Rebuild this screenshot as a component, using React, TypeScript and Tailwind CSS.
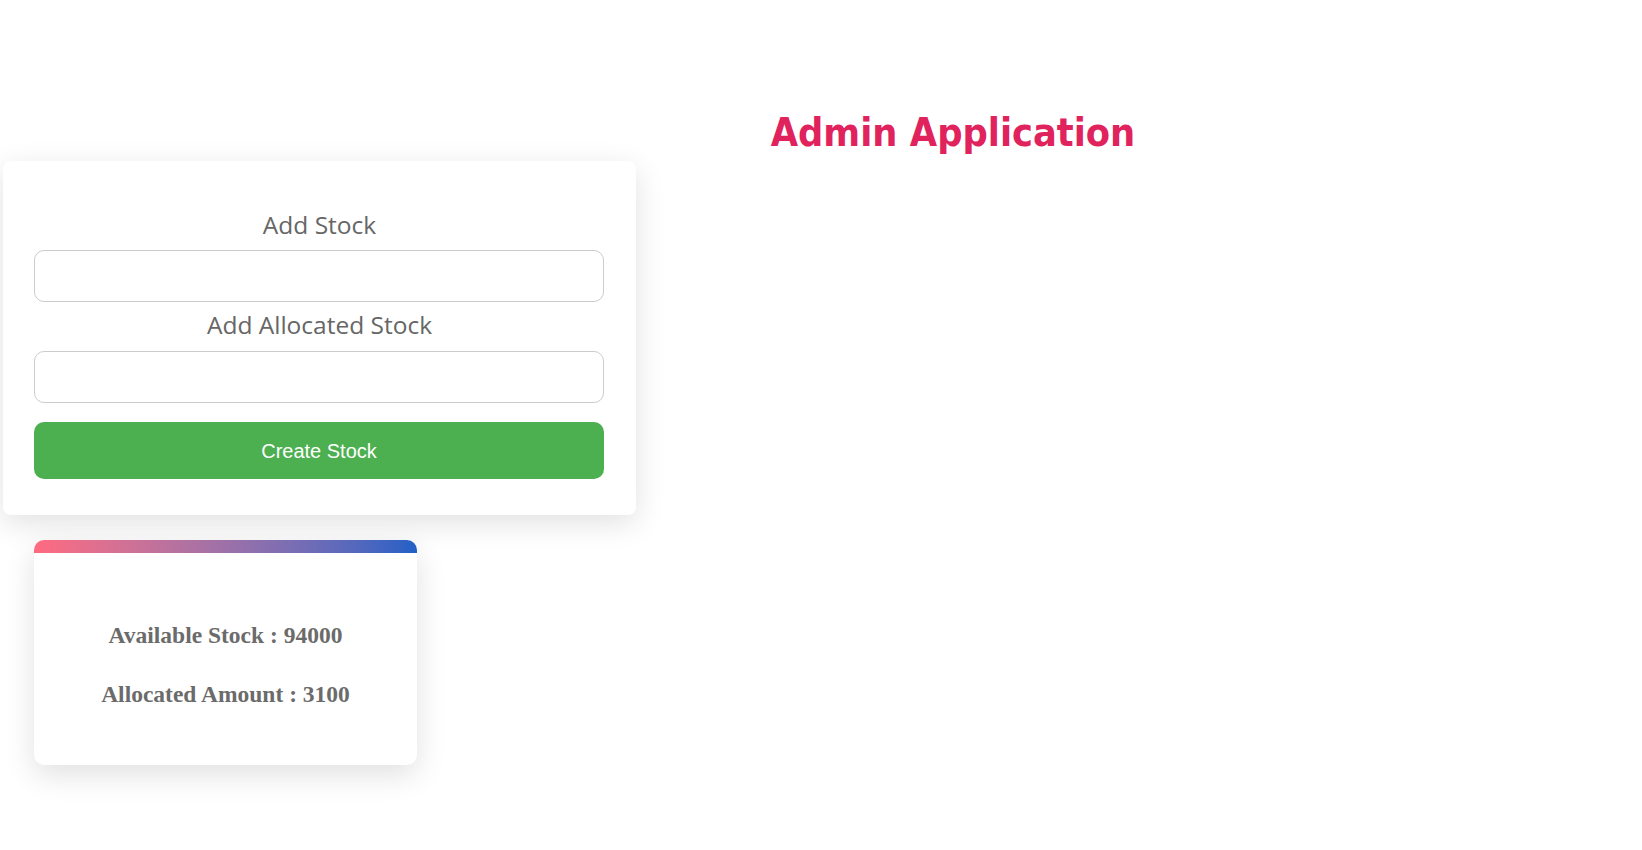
import React from "react";

export default function App() {
  return (
    <div className="min-h-[850px] w-full bg-white">
      <h1
        className="pt-[109px] pl-[264px] text-center text-[39.3px] leading-[48px] font-bold text-[#e0225d] [font-stretch:condensed]"
        style={{ fontFamily: '"DejaVu Sans", Verdana, sans-serif' }}
      >
        Admin Application
      </h1>

      <div className="ml-[3px] mt-[4px] w-[633px] rounded-[8px] bg-white px-[31px] pt-[47px] pb-[36px] shadow-[0_8px_30px_rgba(0,0,0,0.12)]">
        <div className="h-[34px] text-center text-[24.5px] leading-[34px] text-[#666666] [font-family:'Open_Sans',sans-serif]">
          Add Stock
        </div>
        <input
          type="text"
          className="mt-[8px] block h-[52px] w-[570px] rounded-[10px] border border-[#cccccc] bg-white outline-none"
        />
        <div className="mt-[6px] h-[34px] text-center text-[24.5px] leading-[34px] text-[#666666] [font-family:'Open_Sans',sans-serif]">
          Add Allocated Stock
        </div>
        <input
          type="text"
          className="mt-[9px] block h-[52px] w-[570px] rounded-[10px] border border-[#cccccc] bg-white outline-none"
        />
        <button className="mt-[19px] block h-[57px] w-[570px] rounded-[10px] bg-[#4caf50] text-center text-[20px] text-white [font-family:'Liberation_Sans',Arial,sans-serif]">
          Create Stock
        </button>
      </div>

      <div className="ml-[34px] mt-[25px] h-[225px] w-[383px] overflow-hidden rounded-[10px] bg-white shadow-[0_10px_30px_rgba(0,0,0,0.12)]">
        <div className="h-[13px] w-full bg-gradient-to-r from-[#ff6a80] to-[#2160c6]" />
        <div className="pt-[69px] text-center text-[23.5px] font-bold leading-[27px] text-[#6b6b6b] [font-family:'Liberation_Serif','Times_New_Roman',serif]">
          <div>Available Stock : 94000</div>
          <div className="mt-[32px]">Allocated Amount : 3100</div>
        </div>
      </div>
    </div>
  );
}
